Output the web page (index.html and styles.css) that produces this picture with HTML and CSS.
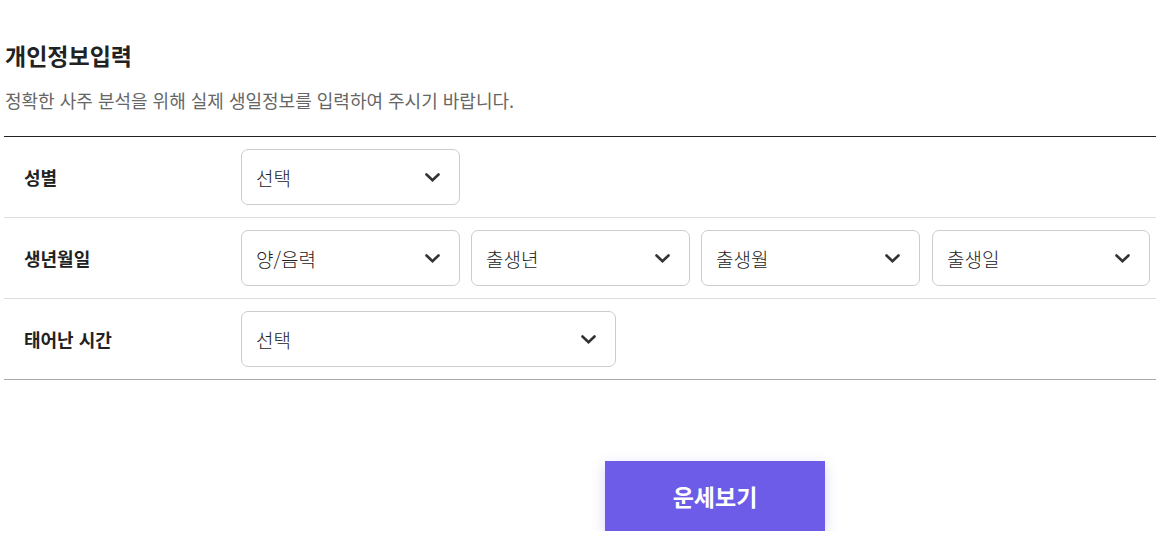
FILE: index.html
```html
<!DOCTYPE html>
<html lang="ko">
<head>
<meta charset="utf-8">
<link rel="stylesheet" href="styles.css">
</head>
<body>
<div class="page">
  <h2 class="title">개인정보입력</h2>
  <p class="desc">정확한 사주 분석을 위해 실제 생일정보를 입력하여 주시기 바랍니다.</p>
  <div class="form">
    <div class="row">
      <div class="label">성별</div>
      <div class="fields">
        <div class="select">선택<svg class="chev" viewBox="0 0 15 9"><path d="M1.5 1.5 L7.5 7.2 L13.5 1.5"/></svg></div>
      </div>
    </div>
    <div class="row">
      <div class="label">생년월일</div>
      <div class="fields">
        <div class="select">양/음력<svg class="chev" viewBox="0 0 15 9"><path d="M1.5 1.5 L7.5 7.2 L13.5 1.5"/></svg></div>
        <div class="select">출생년<svg class="chev" viewBox="0 0 15 9"><path d="M1.5 1.5 L7.5 7.2 L13.5 1.5"/></svg></div>
        <div class="select">출생월<svg class="chev" viewBox="0 0 15 9"><path d="M1.5 1.5 L7.5 7.2 L13.5 1.5"/></svg></div>
        <div class="select last">출생일<svg class="chev" viewBox="0 0 15 9"><path d="M1.5 1.5 L7.5 7.2 L13.5 1.5"/></svg></div>
      </div>
    </div>
    <div class="row last">
      <div class="label">태어난 시간</div>
      <div class="fields">
        <div class="select wide">선택<svg class="chev" viewBox="0 0 15 9"><path d="M1.5 1.5 L7.5 7.2 L13.5 1.5"/></svg></div>
      </div>
    </div>
  </div>
  <div class="actions">
    <button class="btn">운세보기</button>
  </div>
</div>
</body>
</html>
```
FILE: styles.css
```css
html, body {
  margin: 0;
  padding: 0;
  background: #fff;
}
body {
  font-family: "Noto Sans CJK KR", "Noto Sans", sans-serif;
  color: #222;
}
.page {
  padding: 0 0 0 4px;
}
.title {
  margin: 0;
  padding-top: 40px;
  padding-left: 1px;
  font-size: 23px;
  font-weight: 700;
  line-height: 30px;
  color: #222;
}
.desc {
  margin: 17px 0 0 1px;
  font-size: 18px;
  line-height: 26px;
  color: #666;
}
.form {
  margin-top: 23px;
  border-top: 1px solid #222;
  border-bottom: 1px solid #aaa;
}
.row {
  display: flex;
  align-items: center;
  height: 80px;
  border-bottom: 1px solid #ddd;
}
.row.last {
  border-bottom: none;
}
.label {
  width: 237px;
  padding-left: 20px;
  box-sizing: border-box;
  font-size: 18px;
  font-weight: 700;
  color: #222;
}
.fields {
  display: flex;
  gap: 11px;
}
.select {
  box-sizing: border-box;
  width: 219px;
  height: 56px;
  border: 1px solid #ccc;
  border-radius: 7px;
  display: flex;
  align-items: center;
  justify-content: space-between;
  padding: 0 19px 0 14px;
  font-size: 19px;
  font-weight: 300;
  color: #222;
}
.select.last {
  margin-left: 1px;
  width: 218px;
}
.select.wide {
  width: 375px;
}
.chev {
  width: 15px;
  height: 9px;
  fill: none;
  stroke: #333;
  stroke-width: 2.6;
  stroke-linecap: round;
  stroke-linejoin: miter;
}
.actions {
  display: flex;
  padding-left: 601px;
  padding-top: 81px;
}
.btn {
  width: 220px;
  height: 70px;
  border: none;
  background: #6c5ce7;
  color: #fff;
  font-family: "Noto Sans CJK KR", "Noto Sans", sans-serif;
  font-size: 23px;
  font-weight: 700;
  box-shadow: 0 4px 12px rgba(108, 92, 231, 0.25);
}
```
